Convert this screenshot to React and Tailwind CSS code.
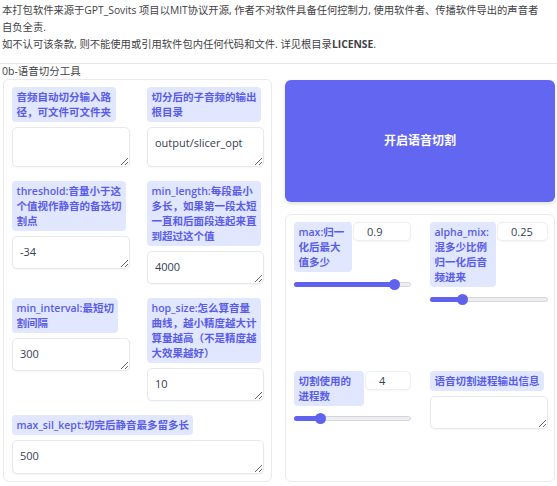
import React from "react";

const Label = ({ lines, className = "" }) => (
  <div
    className={
      "self-start rounded-[4px] bg-[#e0e7ff] px-[4.5px] py-[2.5px] text-[10.5px] font-semibold leading-[15px] text-[#5a5ce8] " +
      className
    }
  >
    {lines.map((l, i) => (
      <div key={i} className="whitespace-nowrap">
        {l}
      </div>
    ))}
  </div>
);

const Area = ({ value = "", h = "h-[33px]" }) => (
  <textarea
    readOnly
    defaultValue={value}
    className={
      "block w-full resize-y rounded-[5px] border border-[#e6e8ec] bg-white px-[7px] py-[7px] text-[11px] leading-[15px] text-[#374151] shadow-[0_1px_2px_rgba(0,0,0,0.04)] outline-none " +
      h
    }
  />
);

const Field = ({ lines, value, h }) => (
  <div className="flex flex-col gap-[5px]">
    <Label lines={lines} />
    <Area value={value} h={h} />
  </div>
);

const Slider = ({ frac }) => {
  const thumbLeft = `calc(${frac} * (100% - 11px))`;
  const fillW = `calc(${frac} * (100% - 11px) + 5.5px)`;
  return (
    <div className="relative mt-[7px] h-[11px] w-full">
      <div className="absolute left-0 right-0 top-[3px] h-[5px] rounded-full border border-[#d4d6dc] bg-[#eceef1]" />
      <div
        className="absolute left-0 top-[3px] h-[5px] rounded-full bg-[#5f62ee]"
        style={{ width: fillW }}
      />
      <div
        className="absolute top-0 h-[11px] w-[11px] rounded-full bg-[#5f62ee]"
        style={{ left: thumbLeft }}
      />
    </div>
  );
};

const NumBox = ({ value }) => (
  <div className="h-[19px] flex-1 rounded-[5px] border border-[#eceef1] bg-white pl-[13px] text-[11px] leading-[17px] text-[#374151] shadow-[0_1px_2px_rgba(0,0,0,0.04)]">
    {value}
  </div>
);

const SliderField = ({ lines, labelW, value, frac }) => (
  <div className="flex flex-col">
    <div className="flex items-start gap-[1px]">
      <Label lines={lines} className={labelW} />
      <NumBox value={value} />
    </div>
    <Slider frac={frac} />
  </div>
);

export default function App() {
  return (
    <div className="h-[486px] w-[557px] overflow-hidden bg-white font-['Open_Sans','Noto_Sans_CJK_SC',sans-serif] text-[#3f3f46]">
      <div className="px-[2px] pt-[2px] text-[10.3px] leading-[17px]">
        <p>
          本打包软件来源于GPT_Sovits 项目以MIT协议开源, 作者不对软件具备任何控制力, 使用软件者、传播软件导出的声音者
          <br />
          自负全责.
        </p>
        <p>
          如不认可该条款, 则不能使用或引用软件包内任何代码和文件. 详见根目录<b>LICENSE</b>.
        </p>
      </div>
      <div className="mt-[10px] border-t border-[#e5e7eb] px-[2px] text-[10.5px] leading-[15px]">
        0b-语音切分工具
      </div>
      <div className="flex gap-[13px] pl-[3px] pr-[2px]">
        <div className="w-[269px] rounded-[6px] border border-[#e9eaee] px-[8px] pb-[7px] pt-[7px] pr-[7px]">
          <div className="grid grid-cols-[118px_117px] gap-x-[17px] gap-y-[14px]">
            <Field lines={["音频自动切分输入路", "径，可文件可文件夹"]} value="" h="h-[40px]" />
            <Field lines={["切分后的子音频的输出", "根目录"]} value="output/slicer_opt" h="h-[40px]" />
            <Field lines={["threshold:音量小于这", "个值视作静音的备选切", "割点"]} value="-34" />
            <Field
              lines={["min_length:每段最小", "多长，如果第一段太短", "一直和后面段连起来直", "到超过这个值"]}
              value="4000"
            />
            <Field lines={["min_interval:最短切", "割间隔"]} value="300" />
            <Field
              lines={["hop_size:怎么算音量", "曲线，越小精度越大计", "算量越高（不是精度越", "大效果越好）"]}
              value="10"
            />
            <div className="col-span-2">
              <Field lines={["max_sil_kept:切完后静音最多留多长"]} value="500" h="h-[34px]" />
            </div>
          </div>
        </div>
        <div className="flex flex-1 flex-col gap-[12px]">
          <button className="mt-[1px] flex h-[122px] w-full items-center justify-center rounded-[6px] bg-[#6366f1] text-[12px] font-bold text-white shadow-[0_2px_4px_rgba(0,0,0,0.12)]">
            开启语音切割
          </button>
          <div className="h-[268px] rounded-[6px] border border-[#e9eaee] pl-[8px] pr-[6px] pt-[7px]">
            <div className="grid grid-cols-[117px_118px] gap-x-[19px]">
              <SliderField lines={["max:归一", "化后最大", "值多少"]} labelW="w-[58px]" value="0.9" frac={0.9} />
              <SliderField
                lines={["alpha_mix:", "混多少比例", "归一化后音", "频进来"]}
                labelW="w-[66px]"
                value="0.25"
                frac={0.25}
              />
            </div>
            <div className="mt-[66px] grid grid-cols-[117px_118px] gap-x-[19px]">
              <SliderField lines={["切割使用的", "进程数"]} labelW="w-[70px]" value="4" frac={0.2} />
              <Field lines={["语音切割进程输出信息"]} value="" h="h-[33px]" />
            </div>
          </div>
        </div>
      </div>
    </div>
  );
}
